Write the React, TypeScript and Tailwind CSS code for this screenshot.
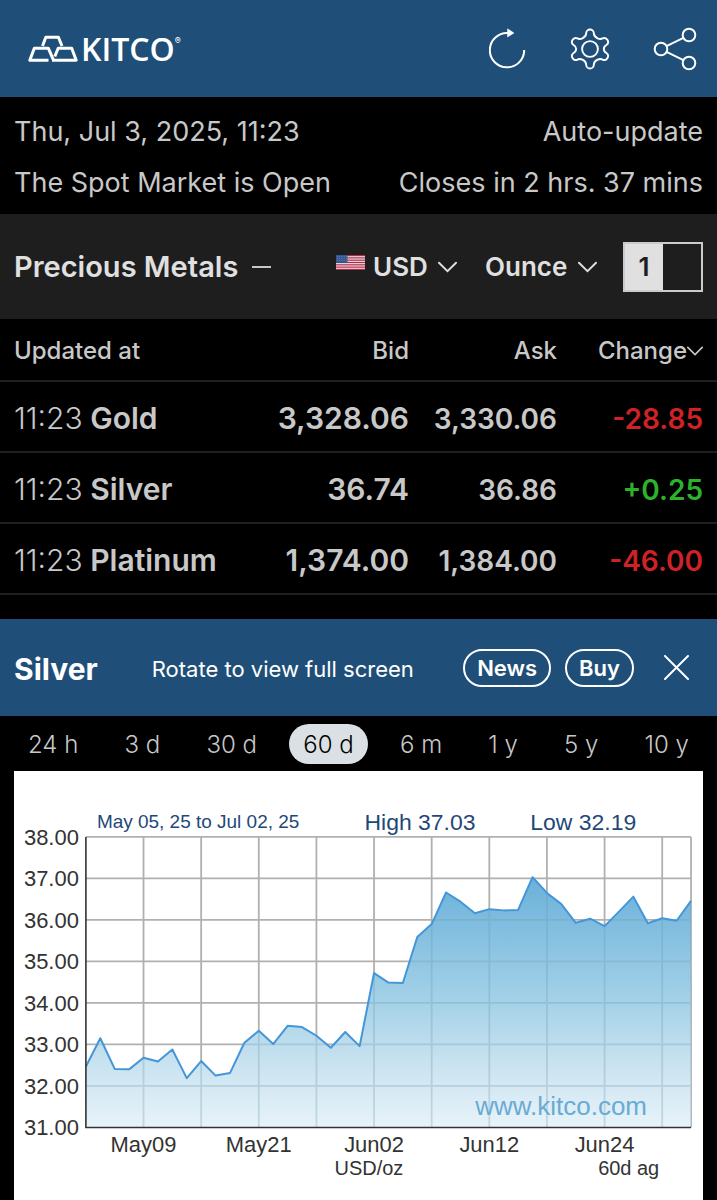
import React, { useState } from 'react';

const metals = [
  { time: '11:23', name: 'Gold', bid: '3,328.06', ask: '3,330.06', change: '-28.85' },
  { time: '11:23', name: 'Silver', bid: '36.74', ask: '36.86', change: '+0.25' },
  { time: '11:23', name: 'Platinum', bid: '1,374.00', ask: '1,384.00', change: '-46.00' },
];

const ranges = ['24 h', '3 d', '30 d', '60 d', '6 m', '1 y', '5 y', '10 y'];

const prices = [
  32.47, 33.15, 32.41, 32.4, 32.68, 32.59, 32.88, 32.19, 32.6, 32.25, 32.31,
  33.04, 33.33, 33.01, 33.45, 33.42, 33.21, 32.92, 33.3, 32.96, 34.72, 34.49,
  34.48, 35.59, 35.9, 36.66, 36.44, 36.16, 36.26, 36.23, 36.24, 37.03, 36.65,
  36.38, 35.93, 36.03, 35.85, 36.2, 36.56, 35.92, 36.04, 35.98, 36.46,
];

// Plot area inside the 690x430 chart
const plot = { left: 72, right: 678, top: 66, bottom: 357 };
const yTicks = [38, 37, 36, 35, 34, 33, 32, 31];
const xTicks = [4, 8, 12, 16, 20, 24, 28, 32, 36, 40, 42];
const xLabels = [
  { at: 4, text: 'May09' },
  { at: 12, text: 'May21' },
  { at: 20, text: 'Jun02' },
  { at: 28, text: 'Jun12' },
  { at: 36, text: 'Jun24' },
];

const xAt = (i: number) => plot.left + (i * (plot.right - plot.left)) / (prices.length - 1);
const yAt = (price: number) => plot.bottom - ((price - 31) * (plot.bottom - plot.top)) / 7;

function Chevron({ className }: { className: string }) {
  return (
    <svg viewBox="0 0 20 12" fill="none" stroke="currentColor" strokeWidth="2" className={className} aria-hidden="true">
      <path d="M1 1.5 10 10.5 19 1.5" strokeLinecap="round" />
    </svg>
  );
}

function Logo() {
  return (
    <a href="#" className="flex items-center text-white">
      <svg viewBox="0 0 50 28" fill="none" stroke="currentColor" strokeWidth="3" strokeLinejoin="round" className="h-7 w-[50px]" aria-hidden="true">
        <path d="M20.500 25.200H1.800L6.300 13.200h14l5.200 12" />
        <path d="M26.800 21.500 30.200 13.200h13.500l4.500 12H24" />
        <path d="M14.500 11 17.800 2.300h12.600l3.600 8.700" />
      </svg>
      <span className="ml-[3px] font-['Open_Sans',sans-serif] text-[32px] leading-8 font-semibold">KITCO</span>
      <span className="mb-4 text-[9px] leading-none">®</span>
    </a>
  );
}

function Flag() {
  return (
    <svg viewBox="0 0 29 15" className="mb-2 h-[15px] w-[29px]" role="img" aria-label="US flag">
      <rect width="29" height="15" fill="#e8dfe3" />
      {[0, 1, 2, 3, 4, 5, 6].map((i) => (
        <rect key={i} y={i * 2.31} width="29" height="1.15" fill="#b52a45" />
      ))}
      <rect width="11.5" height="8" fill="#34558f" />
      {[1.5, 3.5, 5.5].map((y) =>
        [1.5, 3.7, 5.9, 8.1, 10.3].map((x) => <circle key={`${x}-${y}`} cx={x} cy={y} r="0.4" fill="#9db0d0" />)
      )}
    </svg>
  );
}

function Header() {
  return (
    <header className="flex h-[97px] items-center justify-between bg-[#1f4f78] pr-5 pl-7 text-white">
      <Logo />
      <div className="flex items-center gap-[43px]">
        <button type="button" aria-label="Refresh">
          <svg viewBox="0 0 38 42" fill="none" stroke="currentColor" strokeWidth="2" className="h-[42px] w-[38px]">
            <path d="M35.200 22A17.2 17.2 0 1 1 19 5" />
            <path d="M18.500.8 25 5l-6.500 4z" fill="currentColor" strokeWidth="0.5" />
          </svg>
        </button>
        <button type="button" aria-label="Settings">
          <svg viewBox="0 0 42 46" fill="none" stroke="currentColor" strokeWidth="2" strokeLinejoin="round" className="h-11 w-10">
            <path d="M17 6.500a4 4 0 0 1 8 0c0 2.600.6 3.500 3.500 5 2.600 1.400 3.700 1.600 5.700.4a4 4 0 0 1 4 6.900c-2.300 1.300-2.700 2-2.700 4.200s.4 2.900 2.700 4.200a4 4 0 0 1-4 6.900c-2-1.200-3.100-1-5.700.4-2.900 1.500-3.500 2.400-3.500 5a4 4 0 0 1-8 0c0-2.600-.6-3.500-3.500-5-2.600-1.400-3.700-1.600-5.700-.4a4 4 0 0 1-4-6.900c2.300-1.300 2.700-2 2.700-4.200s-.4-2.900-2.700-4.200a4 4 0 0 1 4-6.900c2 1.200 3.100 1 5.700-.4 2.900-1.500 3.500-2.400 3.500-5z" />
            <circle cx="21" cy="23" r="8.300" />
          </svg>
        </button>
        <button type="button" aria-label="Share">
          <svg viewBox="0 0 44 44" fill="none" stroke="currentColor" strokeWidth="2" className="h-11 w-11">
            <circle cx="8" cy="22" r="6.300" />
            <circle cx="36" cy="8" r="6.300" />
            <circle cx="36" cy="36" r="6.300" />
            <path d="M13.500 19.200 30.400 10.800M13.500 24.800l16.900 8.400" />
          </svg>
        </button>
      </div>
    </header>
  );
}

function MarketStatus() {
  return (
    <section className="px-[14px] pt-[9px] pb-[6px] text-[27px] leading-[51px]">
      <div className="flex justify-between">
        <span>Thu, Jul 3, 2025, 11:23</span>
        <span>Auto-update</span>
      </div>
      <div className="flex justify-between">
        <span>The Spot Market is Open</span>
        <span>Closes in 2 hrs. 37 mins</span>
      </div>
    </section>
  );
}

function MetalsToolbar() {
  return (
    <section className="flex h-[105px] items-center bg-[#1e1e1e] px-[14px] text-[#e0e0e0]">
      <button type="button" className="flex items-center gap-[14px]">
        <span className="text-[29px] font-semibold">Precious Metals</span>
        <span className="h-[2px] w-[19px] bg-[#c8c8c8]" />
      </button>
      <div className="ml-auto flex items-center text-[26px] font-semibold">
        <Flag />
        <label className="ml-2 flex items-center gap-[10px]">
          <select aria-label="Currency" className="appearance-none bg-transparent">
            <option>USD</option>
          </select>
          <Chevron className="h-3 w-[19px]" />
        </label>
        <label className="ml-7 flex items-center gap-[10px]">
          <select aria-label="Unit" className="appearance-none bg-transparent">
            <option>Ounce</option>
          </select>
          <Chevron className="h-3 w-[19px]" />
        </label>
        <div className="ml-[26px] flex h-[50px] w-20 border-2 border-[#c8cccc]">
          <button type="button" className="w-1/2 bg-[#e0e0e0] text-[#1e1e1e]">1</button>
          <input type="text" aria-label="Quantity" className="w-1/2 bg-transparent outline-none" />
        </div>
      </div>
    </section>
  );
}

function MetalsTable() {
  return (
    <table className="mb-6 w-full table-fixed">
      <thead>
        <tr className="h-[62px] border-b-2 border-[#202020] text-2xl">
          <th className="pt-[2px] pl-[14px] text-left font-medium">Updated at</th>
          <th className="w-[148px] pt-[2px] text-right font-medium">Bid</th>
          <th className="w-[148px] pt-[2px] text-right font-medium">Ask</th>
          <th className="w-[160px] pt-[2px] pr-[14px] font-medium">
            <button type="button" className="ml-auto flex items-center">
              Change
              <Chevron className="h-[10px] w-4" />
            </button>
          </th>
        </tr>
      </thead>
      <tbody>
        {metals.map((m) => (
          <tr key={m.name} className="h-[71px] border-b-2 border-[#202020] text-right text-[28px] font-semibold">
            <td className="pt-1 pl-[14px] text-left text-[30px]">
              <span className="font-light">{m.time}</span> <span>{m.name}</span>
            </td>
            <td className="pt-1 text-[30px]">{m.bid}</td>
            <td className="pt-1">{m.ask}</td>
            <td className={m.change.startsWith('+') ? 'pt-1 pr-[14px] text-[#2db32b]' : 'pt-1 pr-[14px] text-[#cf2226]'}>
              {m.change}
            </td>
          </tr>
        ))}
      </tbody>
    </table>
  );
}

function PriceChart() {
  const line = prices.map((p, i) => `${xAt(i)},${yAt(p)}`).join(' ');
  const area = `${plot.left},${plot.bottom} ${line} ${plot.right},${plot.bottom}`;

  const grid = (
    <>
      {yTicks.slice(0, -1).map((t) => (
        <line key={t} x1={plot.left} x2={plot.right} y1={yAt(t)} y2={yAt(t)} />
      ))}
      {xTicks.map((t) => (
        <line key={t} x1={xAt(t)} x2={xAt(t)} y1={plot.top} y2={plot.bottom} />
      ))}
    </>
  );

  return (
    <svg viewBox="0 0 690 430" className="block h-auto w-full bg-white font-['Liberation_Sans',sans-serif]" role="img" aria-label="Silver price, 60 days">
      <defs>
        <linearGradient id="area" gradientUnits="userSpaceOnUse" x1="0" y1="107" x2="0" y2="357">
          <stop offset="0" stopColor="#6bb1da" />
          <stop offset="0.5" stopColor="#a5d2e8" />
          <stop offset="0.75" stopColor="#cae3f0" />
          <stop offset="1" stopColor="#e8f3fa" />
        </linearGradient>
        <clipPath id="under-line">
          <polygon points={area} />
        </clipPath>
      </defs>

      <g stroke="#b0b0b0" strokeWidth="1.8">{grid}</g>
      <polygon points={area} fill="url(#area)" />
      <g stroke="#6f98ad" strokeWidth="1.8" opacity="0.3" clipPath="url(#under-line)">{grid}</g>
      <polyline points={line} fill="none" stroke="#4596d8" strokeWidth="2" strokeLinejoin="round" />
      <path d={`M${plot.left} ${plot.top}V${plot.bottom}H${plot.right}`} fill="none" stroke="#333" strokeWidth="1.6" />

      <g fill="#1f4878" fontSize="23">
        <text x="83" y="57" fontSize="19">May 05, 25 to Jul 02, 25</text>
        <text x="351" y="59">High 37.03</text>
        <text x="517" y="59">Low 32.19</text>
      </g>
      <text x="462" y="344" fontSize="26" fill="#69abd3">www.kitco.com</text>

      <g fill="#333" fontSize="22">
        {yTicks.map((t) => (
          <text key={t} x="65" y={yAt(t) + 8} textAnchor="end">{t.toFixed(2)}</text>
        ))}
        {xLabels.map((l) => (
          <text key={l.text} x={xAt(l.at)} y="382" textAnchor="middle">{l.text}</text>
        ))}
        <text x="321" y="405" fontSize="20">USD/oz</text>
        <text x="585" y="405" fontSize="20">60d ag</text>
      </g>
    </svg>
  );
}

export default function App() {
  const [range, setRange] = useState('60 d');

  return (
    <div className="min-h-screen bg-black font-['Inter',sans-serif] text-[#c8c8c8]">
      <Header />
      <MarketStatus />
      <MetalsToolbar />
      <MetalsTable />

      <section>
        <div className="flex h-[97px] items-center bg-[#1f4f78] pr-7 pl-[14px] text-white">
          <h2 className="pt-1 text-[30px] font-bold">Silver</h2>
          <p className="ml-[54px] pt-1 text-[22px]">Rotate to view full screen</p>
          <div className="ml-auto flex items-center gap-[14px] text-[22px] font-semibold">
            <a href="#news" className="flex h-[38px] items-center rounded-full border-2 border-white px-3 pt-[2px]">News</a>
            <a href="#buy" className="flex h-[38px] items-center rounded-full border-2 border-white px-3 pt-[2px]">Buy</a>
            <button type="button" aria-label="Close" className="ml-4">
              <svg viewBox="0 0 25 25" fill="none" stroke="currentColor" strokeWidth="2" strokeLinecap="round" className="size-[25px]">
                <path d="m1 1 23 23M24 1 1 24" />
              </svg>
            </button>
          </div>
        </div>

        <div className="flex h-[55px] items-center justify-between px-[14px] text-2xl font-light">
          {ranges.map((r) => (
            <button
              key={r}
              type="button"
              onClick={() => setRange(r)}
              className={r === range ? 'h-10 rounded-full bg-[#dae0e3] px-[14px] pt-[2px] text-black' : 'h-10 px-[14px] pt-[2px]'}
            >
              {r}
            </button>
          ))}
        </div>

        <div className="px-[14px]">
          <PriceChart />
        </div>
      </section>
    </div>
  );
}
